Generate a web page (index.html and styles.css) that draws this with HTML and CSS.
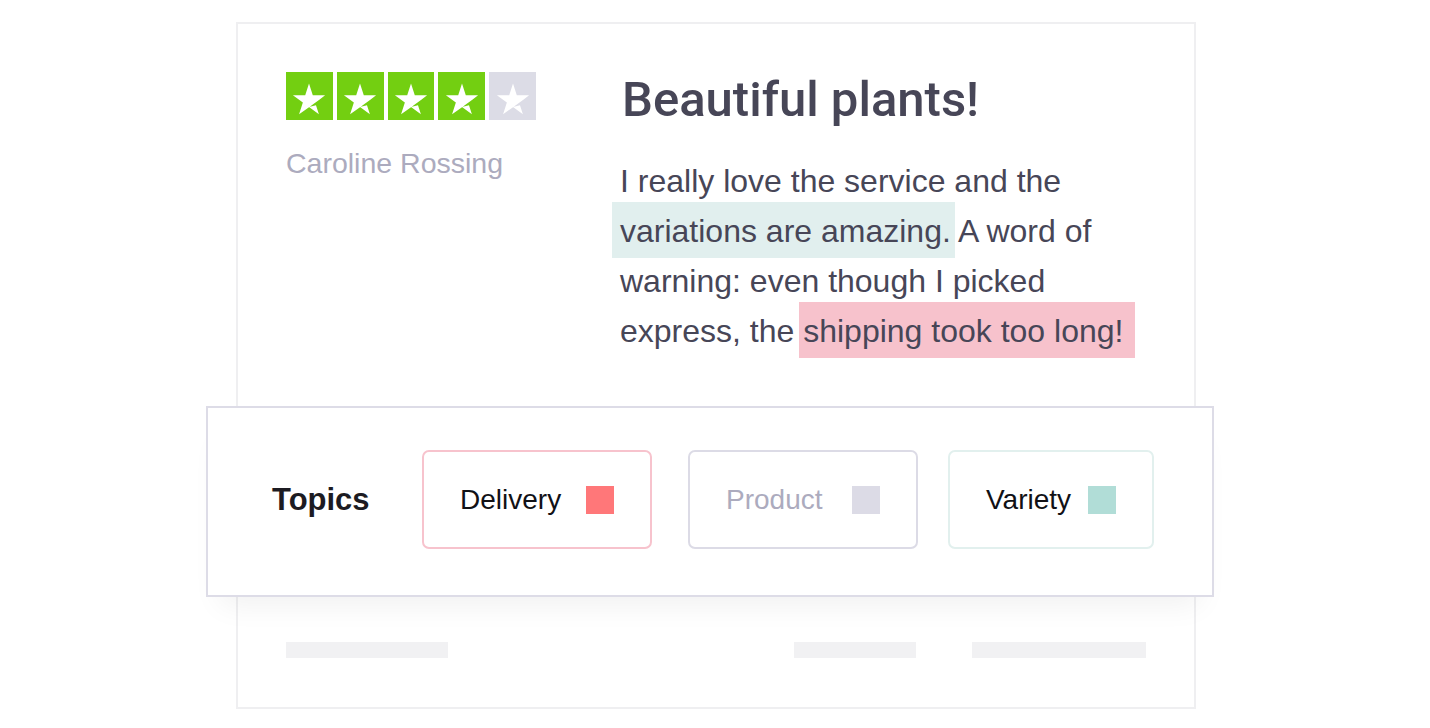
FILE: index.html
```html
<!DOCTYPE html>
<html lang="en">
<head>
<meta charset="utf-8">
<title>Review topics</title>
<link rel="stylesheet" href="styles.css">
</head>
<body>
<div class="page">
  <div class="card">
    <section class="review">
      <div class="review__meta">
        <div class="stars">
          <span class="star star--on"><svg viewBox="0 0 24 24"><path d="M12 17.74l3.65-.93 1.52 4.7L12 17.74zm8.4-6.07h-6.42L12 5.5l-1.98 6.17H3.6l5.2 3.73-1.98 6.17 5.2-3.73 3.2-2.3 2.18-1.57z" fill="#fff"/></svg></span>
          <span class="star star--on"><svg viewBox="0 0 24 24"><path d="M12 17.74l3.65-.93 1.52 4.7L12 17.74zm8.4-6.07h-6.42L12 5.5l-1.98 6.17H3.6l5.2 3.73-1.98 6.17 5.2-3.73 3.2-2.3 2.18-1.57z" fill="#fff"/></svg></span>
          <span class="star star--on"><svg viewBox="0 0 24 24"><path d="M12 17.74l3.65-.93 1.52 4.7L12 17.74zm8.4-6.07h-6.42L12 5.5l-1.98 6.17H3.6l5.2 3.73-1.98 6.17 5.2-3.73 3.2-2.3 2.18-1.57z" fill="#fff"/></svg></span>
          <span class="star star--on"><svg viewBox="0 0 24 24"><path d="M12 17.74l3.65-.93 1.52 4.7L12 17.74zm8.4-6.07h-6.42L12 5.5l-1.98 6.17H3.6l5.2 3.73-1.98 6.17 5.2-3.73 3.2-2.3 2.18-1.57z" fill="#fff"/></svg></span>
          <span class="star star--off"><svg viewBox="0 0 24 24"><path d="M12 17.74l3.65-.93 1.52 4.7L12 17.74zm8.4-6.07h-6.42L12 5.5l-1.98 6.17H3.6l5.2 3.73-1.98 6.17 5.2-3.73 3.2-2.3 2.18-1.57z" fill="#fff"/></svg></span>
        </div>
        <div class="author">Caroline Rossing</div>
      </div>
      <div class="review__body">
        <h1 class="review__title">Beautiful plants!</h1>
        <p class="review__text">I really love the service and the<br><span class="hl hl--teal">variations are amazing.</span> A word of<br>warning: even though I picked<br>express, the <span class="hl hl--pink">shipping took too long!</span></p>
      </div>
    </section>

    <section class="topics">
      <div class="topics__label">Topics</div>
      <div class="topics__chips">
        <div class="chip chip--delivery"><span class="chip__text">Delivery</span><span class="chip__swatch"></span></div>
        <div class="chip chip--product"><span class="chip__text">Product</span><span class="chip__swatch"></span></div>
        <div class="chip chip--variety"><span class="chip__text">Variety</span><span class="chip__swatch"></span></div>
      </div>
    </section>

    <section class="skeleton">
      <span class="bar bar--a"></span>
      <span class="bar bar--b"></span>
      <span class="bar bar--c"></span>
    </section>
  </div>
</div>
</body>
</html>
```

FILE: styles.css
```css
* { box-sizing: border-box; }

html, body {
  margin: 0;
  padding: 0;
  background: #ffffff;
}

body {
  font-family: "Liberation Sans", Arial, sans-serif;
  color: #474657;
}

.page {
  padding-top: 22px;
  padding-left: 236px;
}

.card {
  width: 960px;
  border: 2px solid #efeff1;
  background: #ffffff;
}

/* Review */
.review {
  display: grid;
  grid-template-columns: 334px 1fr;
  padding: 48px 48px 50px 48px;
}

.stars {
  display: flex;
  gap: 4px;
  width: 250px;
}

.star {
  flex: 1 1 0;
  height: 48px;
  display: flex;
  align-items: center;
  justify-content: center;
}

.star svg {
  width: 46px;
  height: 46px;
  display: block;
}

.star--on { background: #73cf11; }
.star--off { background: #dcdce6; }

.author {
  margin-top: 28px;
  font-size: 28.5px;
  line-height: 30px;
  color: #acabbe;
}

.review__title {
  margin: 0 0 28px 2px;
  font-family: Roboto, "Liberation Sans", Arial, sans-serif;
  font-weight: 500;
  font-size: 49px;
  line-height: 56px;
  color: #474657;
}

.review__text {
  margin: 0;
  font-size: 32px;
  line-height: 50px;
  color: #474657;
}

.hl {
  padding: 11px 0 9px 0;
}

.hl--teal {
  background: #e1efee;
  box-shadow: -8px 0 0 #e1efee, 4px 0 0 #e1efee;
}

.hl--pink {
  background: #f7c2cc;
  box-shadow: -4px 0 0 #f7c2cc, 12px 0 0 #f7c2cc;
}

/* Topics panel */
.topics {
  display: flex;
  align-items: center;
  margin: 0 -20px 0 -32px;
  padding: 42px 0 46px 64px;
  border: 2px solid #dddce7;
  background: #ffffff;
  box-shadow: 0 22px 28px -14px rgba(0, 0, 0, 0.06);
}

.topics__label {
  width: 150px;
  font-size: 31px;
  font-weight: bold;
  color: #1c1b22;
}

.topics__chips {
  display: flex;
}

.chip {
  height: 99px;
  display: flex;
  align-items: center;
  justify-content: space-between;
  padding: 0 36px 0 36px;
  border: 2px solid;
  border-radius: 7px;
  font-size: 28px;
  color: #111116;
}

.chip__swatch {
  width: 28px;
  height: 28px;
  display: block;
}

.chip--delivery { width: 230px; border-color: #f7c3cd; }
.chip--delivery .chip__swatch { background: #ff7779; }

.chip--product { width: 230px; margin-left: 36px; border-color: #dcdbe6; color: #acabbe; }
.chip--product .chip__swatch { background: #dcdbe6; }

.chip--variety { width: 206px; margin-left: 30px; border-color: #e2f0ee; }
.chip--variety .chip__swatch { background: #b1ddd7; }

/* Skeleton bars */
.skeleton {
  display: flex;
  padding: 45px 48px 49px 48px;
}

.bar {
  display: block;
  height: 16px;
  background: #f1f1f3;
}

.bar--a { width: 162px; }
.bar--b { width: 122px; margin-left: auto; }
.bar--c { width: 174px; margin-left: 56px; }
```
